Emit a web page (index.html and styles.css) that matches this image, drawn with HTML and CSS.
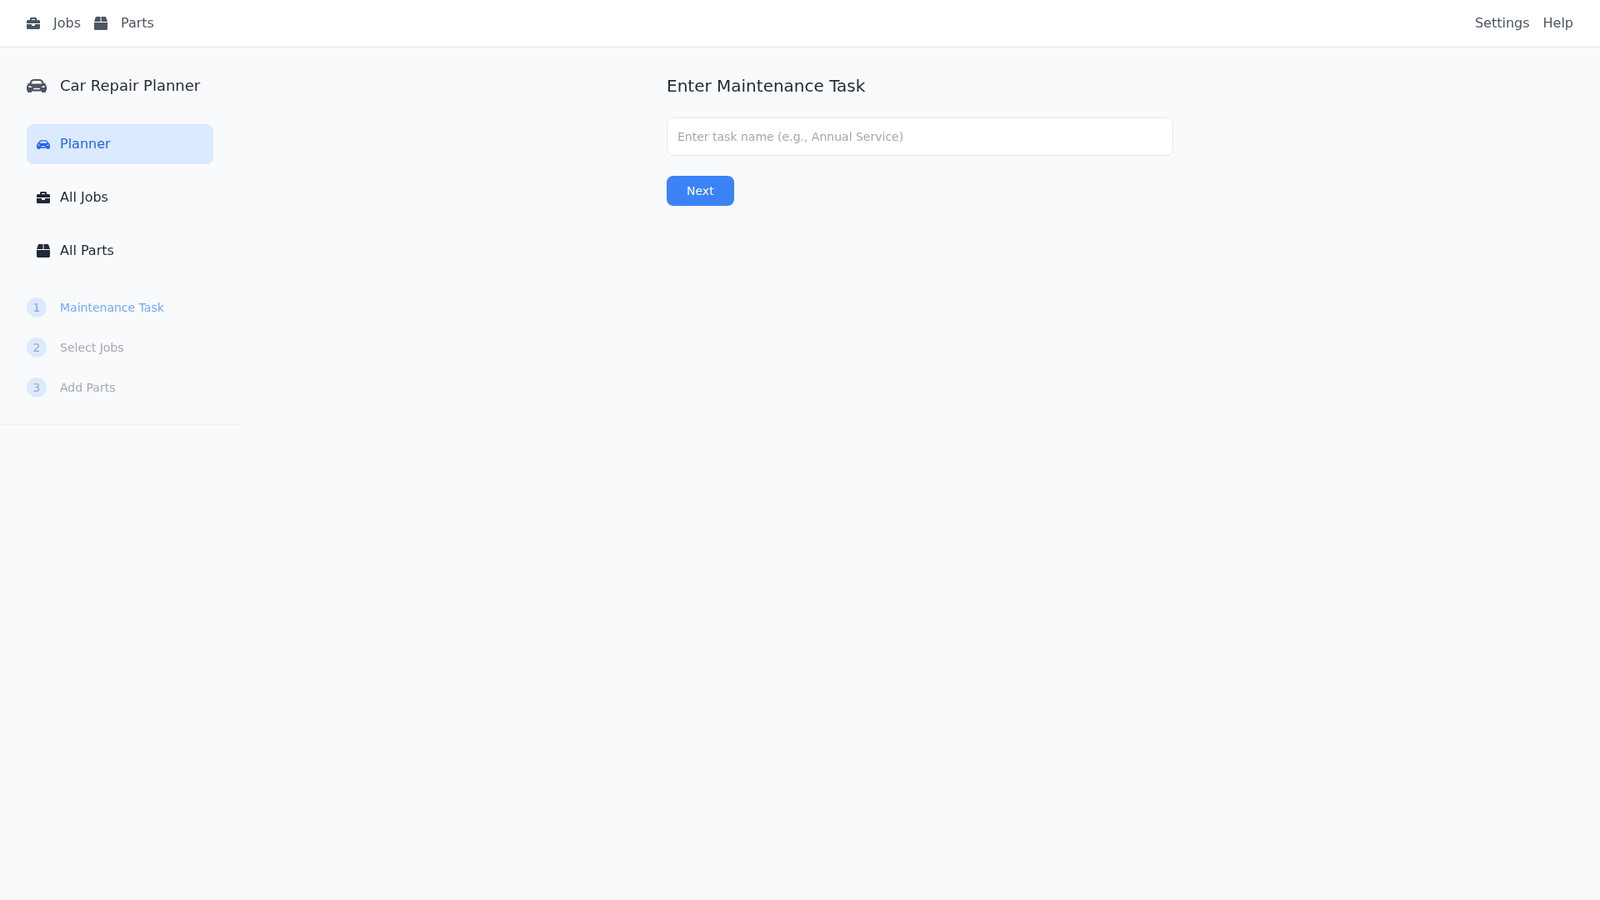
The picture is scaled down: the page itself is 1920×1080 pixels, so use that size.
FILE: index.html
```html
<!DOCTYPE html>
<html lang="en">
<head>
<meta charset="utf-8">
<title>Car Repair Planner</title>
<link rel="stylesheet" href="styles.css">
</head>
<body>
<svg class="defs" aria-hidden="true">
  <defs>
    <symbol id="i-car" viewBox="0 0 24 16"><path fill-rule="evenodd" d="M8.5 0H15.5C17.4 0 18.8 .9 19.6 2.6L20.8 5.1L21.8 4.9C22.6 4.9 23 5.6 22.6 6.2L22.2 6.6C23.4 7.3 24 8.3 24 9.6V12.4C24 13.2 23.7 13.8 23 14.1V15C23 15.6 22.6 16 22 16H19C18.4 16 18 15.6 18 15V14.4H6V15C6 15.6 5.6 16 5 16H2C1.4 16 1 15.6 1 15V14.1C.3 13.8 0 13.2 0 12.4V9.6C0 8.3 .6 7.3 1.8 6.6L1.4 6.2C1 5.6 1.4 4.9 2.2 4.9L3.2 5.1L4.4 2.6C5.2 .9 6.6 0 8.5 0ZM8.7 2C7.6 2 6.8 2.5 6.3 3.5L5.4 5.4H18.6L17.7 3.5C17.2 2.5 16.4 2 15.3 2ZM2.7 8C2.3 8 2.1 8.3 2.2 8.7C2.4 9.5 2.9 10 3.6 10H6.6C5.8 8.8 4.2 8 2.7 8ZM21.3 8C19.8 8 18.2 8.8 17.4 10H20.4C21.1 10 21.6 9.5 21.8 8.7C21.9 8.3 21.7 8 21.3 8ZM8.6 10.8C8.2 10.8 8 11.1 8 11.5S8.2 12.2 8.6 12.2H15.4C15.8 12.2 16 11.9 16 11.5S15.8 10.8 15.4 10.8Z"/></symbol>
    <symbol id="i-job" viewBox="0 0 512 512"><path d="M320 336c0 8.84-7.16 16-16 16h-96c-8.84 0-16-7.16-16-16v-48H0v144c0 25.6 22.4 48 48 48h416c25.6 0 48-22.4 48-48V288H320v48zm144-208h-80V80c0-25.6-22.4-48-48-48H176c-25.6 0-48 22.4-48 48v48H48c-25.6 0-48 22.4-48 48v80h512v-80c0-25.6-22.4-48-48-48zm-144 0H192V96h128v32z"/></symbol>
    <symbol id="i-box" viewBox="0 0 512 512"><path d="M509.5 184.6L458.9 32.8C452.4 13.2 434.1 0 413.4 0H272v192h238.7c-.4-2.5-.4-5-1.2-7.4zM240 0H98.6c-20.7 0-39 13.2-45.5 32.8L2.5 184.6c-.8 2.4-.8 4.9-1.2 7.4H240V0zM0 224v240c0 26.5 21.5 48 48 48h416c26.5 0 48-21.5 48-48V224H0z"/></symbol>
  </defs>
</svg>
<header class="topbar">
  <nav class="topnav">
    <a class="toplink"><svg class="icon"><use href="#i-job"/></svg><span>Jobs</span></a>
    <a class="toplink"><svg class="icon"><use href="#i-box"/></svg><span>Parts</span></a>
  </nav>
  <nav class="topnav">
    <a class="toplink">Settings</a>
    <a class="toplink">Help</a>
  </nav>
</header>
<div class="layout">
  <aside class="sidebar">
    <div class="brand"><svg class="icon brand-icon"><use href="#i-car"/></svg><h1 class="brand-title">Car Repair Planner</h1></div>
    <nav class="menu">
      <a class="menu-item active"><svg class="icon car-small"><use href="#i-car"/></svg><span>Planner</span></a>
      <a class="menu-item"><svg class="icon"><use href="#i-job"/></svg><span>All Jobs</span></a>
      <a class="menu-item"><svg class="icon"><use href="#i-box"/></svg><span>All Parts</span></a>
    </nav>
    <ol class="steps">
      <li class="step current"><span class="step-num">1</span><span>Maintenance Task</span></li>
      <li class="step"><span class="step-num">2</span><span>Select Jobs</span></li>
      <li class="step"><span class="step-num">3</span><span>Add Parts</span></li>
    </ol>
  </aside>
  <main class="main">
    <div class="panel">
      <h2 class="panel-title">Enter Maintenance Task</h2>
      <input class="task-input" type="text" placeholder="Enter task name (e.g., Annual Service)">
      <button class="next-btn" type="button">Next</button>
    </div>
  </main>
</div>
</body>
</html>
```
FILE: styles.css
```css
* { box-sizing: border-box; }
html, body { margin: 0; height: 100%; }
body {
  background: #f9fafb;
  color: #1f2937;
  font-family: "DejaVu Sans", sans-serif;
  font-size: 16px;
  line-height: 24px;
}
.defs { display: none; }
.icon { display: block; width: 16px; height: 16px; fill: currentColor; flex: none; }
.car-small { height: 11px; }

.topbar {
  display: flex;
  justify-content: space-between;
  align-items: center;
  height: 57px;
  padding: 0 32px;
  background: #fff;
  border-bottom: 1px solid #e5e7eb;
  will-change: transform;
}
.topnav { display: flex; gap: 16px; }
.toplink { display: flex; align-items: center; gap: 16px; color: #4b5563; }

.layout { display: flex; align-items: flex-start; will-change: transform; }
.sidebar {
  width: 288px;
  flex: none;
  padding: 32px;
  border-bottom: 1px dotted #e5e7eb;
}
.brand { display: flex; align-items: center; gap: 16px; margin-bottom: 32px; }
.brand-icon { width: 24px; height: 16px; color: #4b5563; }
.brand-title { margin: 0; font-size: 18px; line-height: 28px; font-weight: 400; color: #1f2937; }

.menu { display: flex; flex-direction: column; gap: 16px; }
.menu-item {
  display: flex;
  align-items: center;
  gap: 12px;
  height: 48px;
  padding: 0 12px;
  border-radius: 8px;
  color: #1f2937;
}
.menu-item.active { background: #dbeafe; color: #2563eb; }

.steps {
  display: flex;
  flex-direction: column;
  gap: 24px;
  list-style: none;
  margin: 32px 0 0;
  padding: 0;
}
.step { display: flex; align-items: center; gap: 16px; font-size: 14px; line-height: 24px; color: #a3a8b4; }
.step.current { color: #6ea8fb; }
.step-num {
  display: flex;
  align-items: center;
  justify-content: center;
  width: 24px;
  height: 24px;
  border-radius: 50%;
  background: #dbeafe;
}

.main { flex: 1; padding: 32px; }
.panel { width: 608px; margin: 0 auto; }
.panel-title { margin: 0 0 24px; font-size: 20px; line-height: 28px; font-weight: 400; color: #1f2937; }
.task-input {
  display: block;
  width: 100%;
  height: 46px;
  padding: 0 12px;
  margin-bottom: 24px;
  background: #fff;
  border: 1px solid #e5e7eb;
  border-radius: 8px;
  font-family: inherit;
  font-size: 14px;
  color: #1f2937;
  outline: none;
}
.task-input::placeholder { color: #a1a7b3; opacity: 1; }
.next-btn {
  display: block;
  height: 36px;
  padding: 0 24px;
  background: #3b82f6;
  color: #fff;
  border: 0;
  border-radius: 8px;
  font-family: inherit;
  font-size: 14px;
  line-height: 20px;
}
```
